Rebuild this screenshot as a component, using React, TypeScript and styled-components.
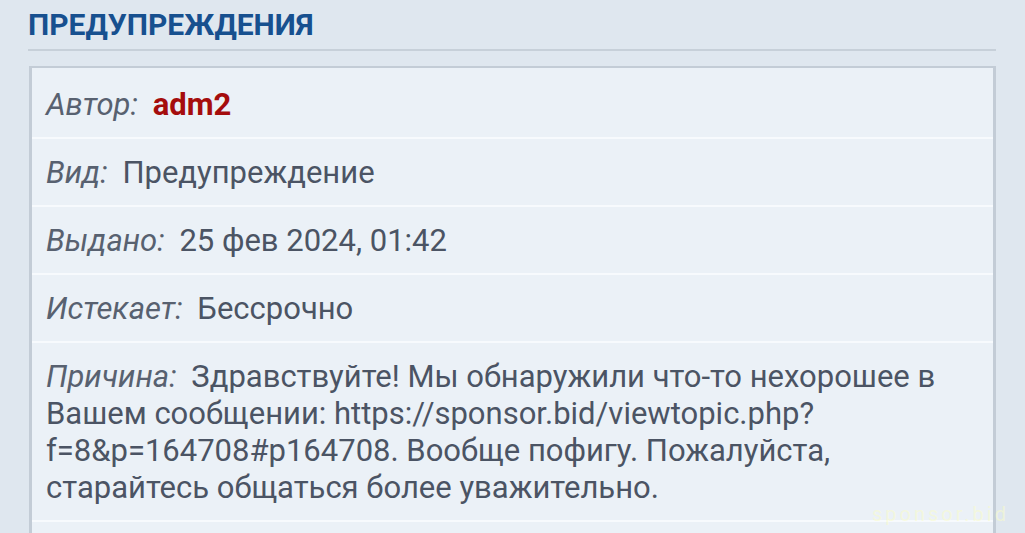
import styled, { createGlobalStyle } from "styled-components";

const GlobalStyle = createGlobalStyle`
  html, body {
    margin: 0;
    padding: 0;
    background: #dfe7ef;
    font-family: Roboto, "Noto Sans", "DejaVu Sans", sans-serif;
  }
`;

type Row = {
  label: string;
  value: string;
  author?: boolean;
};

const rows: Row[] = [
  { label: "Автор:", value: "adm2", author: true },
  { label: "Вид:", value: "Предупреждение" },
  { label: "Выдано:", value: "25 фев 2024, 01:42" },
  { label: "Истекает:", value: "Бессрочно" },
  {
    label: "Причина:",
    value:
      "Здравствуйте! Мы обнаружили что-то нехорошее в Вашем сообщении: https://sponsor.bid/viewtopic.php?f=8&p=164708#p164708. Вообще пофигу. Пожалуйста, старайтесь общаться более уважительно.",
  },
];

export default function App() {
  return (
    <>
      <GlobalStyle />
      <Page>
        <Title>ПРЕДУПРЕЖДЕНИЯ</Title>
        <Panel>
          {rows.map((r) => (
            <Item key={r.label}>
              <Label>{r.label}</Label>{" "}
              <Value $author={r.author}>{r.value}</Value>
            </Item>
          ))}
          <Filler />
        </Panel>
        <Watermark>sponsor.bid</Watermark>
      </Page>
    </>
  );
}

const Page = styled.div`
  position: relative;
  height: 533px;
  overflow: hidden;
  padding: 0 29px 0 28px;
`;

const Title = styled.h2`
  margin: 0;
  padding: 8px 0 7px;
  font-size: 30px;
  line-height: 34px;
  font-weight: 700;
  color: #17508f;
  border-bottom: 2px solid #c7d0d9;
`;

const Panel = styled.div`
  margin: 15px 0 0 1px;
  padding-top: 3px;
  background: #ebf1f7;
  border: 2px solid #c3ccd6;
  border-left-width: 3px;
  border-right-width: 3px;
`;

const Item = styled.div`
  padding: 14.5px 16px 14.5px 14px;
  font-size: 31px;
  line-height: 37px;
  color: #4b5464;
  border-bottom: 2px solid #f7fafd;
`;

const Label = styled.span`
  font-style: italic;
  color: #586170;
  margin-right: 7px;
`;

const Value = styled.span<{ $author?: boolean }>`
  font-weight: ${(p) => (p.$author ? 700 : 400)};
  color: ${(p) => (p.$author ? "#a50d0d" : "#4b5464")};
`;

const Filler = styled.div`
  height: 60px;
`;

const Watermark = styled.div`
  position: absolute;
  left: 872px;
  top: 502px;
  font-size: 20px;
  letter-spacing: 3px;
  color: rgba(250, 252, 200, 0.55);
  pointer-events: none;
`;
